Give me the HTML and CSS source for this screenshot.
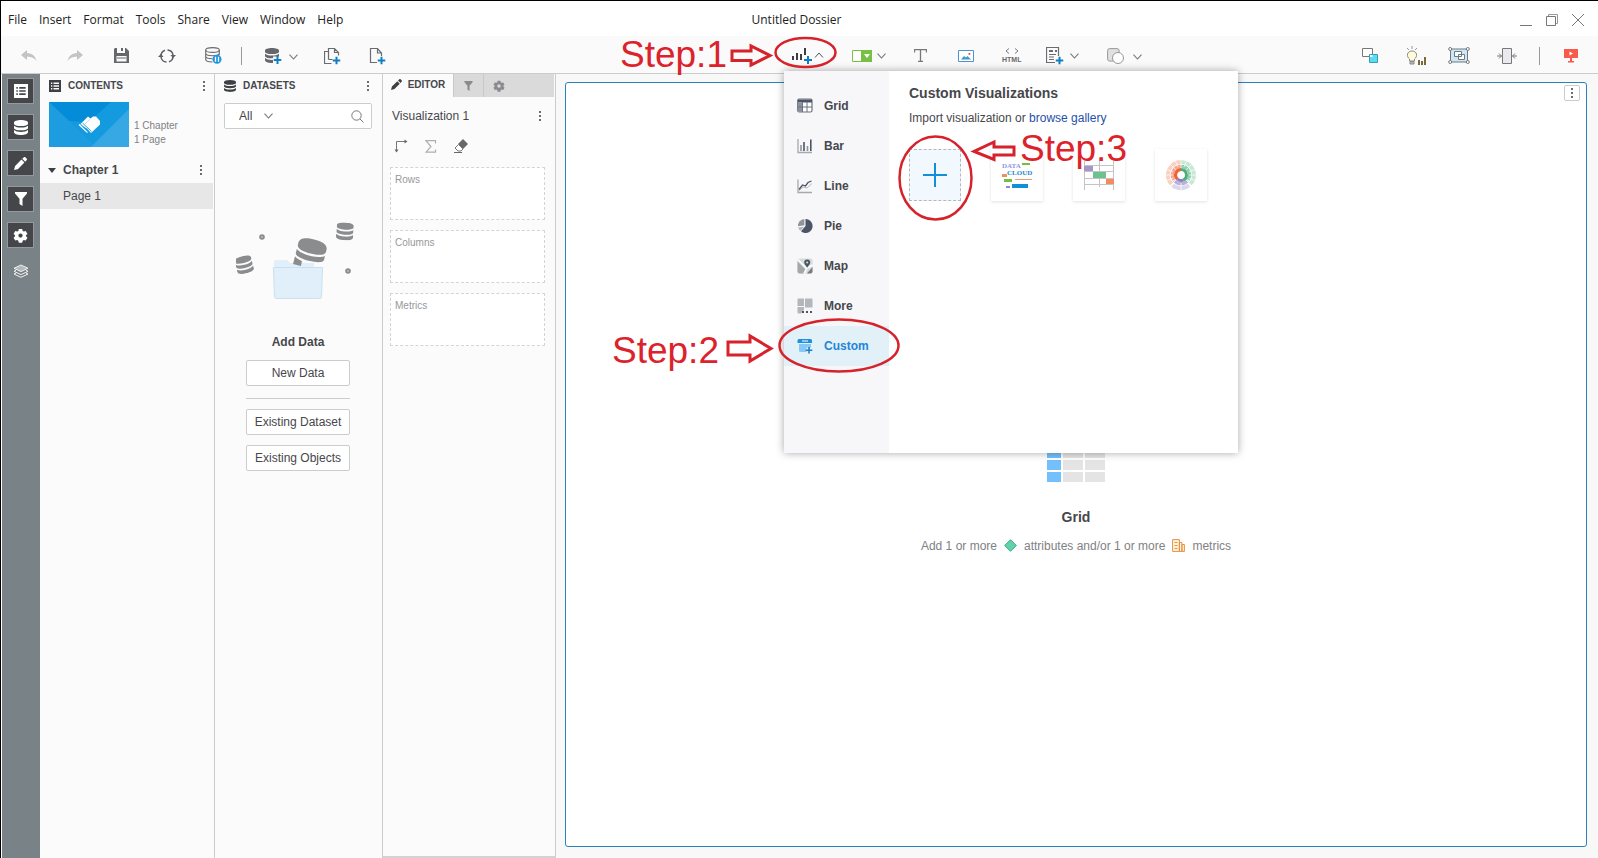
FILE: index.html
```html
<!DOCTYPE html>
<html lang="en">
<head>
<meta charset="utf-8">
<title>Untitled Dossier</title>
<link rel="stylesheet" href="styles.css">
</head>
<body>
<svg class="defs" aria-hidden="true">
  <symbol id="plus" viewBox="0 0 8 8"><path d="M3 0h2v3h3v2H5v3H3V5H0V3h3z" fill="#0f7fc4"/></symbol>
  <symbol id="chev" viewBox="0 0 9 6"><path d="M.5.7 4.500 5 8.500.7" fill="none" stroke="#777" stroke-width="1.100"/></symbol>
  <symbol id="kebab" viewBox="0 0 2 10"><path d="M0 0h2v2H0zM0 4h2v2H0zM0 8h2v2H0z" fill="#6a6c70"/></symbol>
  <symbol id="gear" viewBox="0 0 16 16"><path fill-rule="evenodd" d="M6.200 1h3.600l.5 2.100 1.200.7 2.100-.6 1.800 3.100-1.600 1.500v1l1.600 1.500-1.800 3.100-2.100-.6-1.200.7-.5 2.100H6.200l-.5-2.100-1.200-.7-2.100.6L.6 10.300l1.600-1.500v-1L.6 6.300l1.800-3.100 2.100.6 1.200-.7zM8 5.800a2.300 2.300 0 1 0 0 4.600 2.300 2.300 0 0 0 0-4.600z"/></symbol>
  <symbol id="funnel" viewBox="0 0 12 14"><path d="M0 0h12v1.500L7.500 6.800V14l-3-2V6.800L0 1.500z"/></symbol>
  <symbol id="pencil" viewBox="0 0 14 14"><path d="M0 14l1.200-4.400L8 2.800l3.200 3.200-6.800 6.800zM8.900 1.900 10.400.5c.6-.6 1.400-.6 2 0l1.100 1.100c.6.6.6 1.400 0 2l-1.400 1.500z"/></symbol>
  <symbol id="data" viewBox="0 0 14 15"><path d="M0 2.600C0 1.100 3 0 7 0s7 1.100 7 2.600v1.100c0 1.400-3 2.300-7 2.300S0 5.100 0 3.700zM0 5.700C1.500 7 4 7.600 7 7.600s5.500-.6 7-1.900v2.200c0 1.400-3 2.400-7 2.400S0 9.300 0 7.900zM0 10c1.500 1.300 4 1.900 7 1.900s5.500-.6 7-1.900v2.300C14 13.800 11 15 7 15s-7-1.200-7-2.700z"/></symbol>
  <symbol id="list" viewBox="0 0 12 12"><path fill-rule="evenodd" d="M0 0h12v12H0zM2 2.500V4h1.300V2.500zm2.500 0V4H10V2.500zM2 5.300v1.400h1.300V5.300zm2.500 0v1.400H10V5.300zM2 8v1.500h1.300V8zm2.500 0v1.500H10V8z"/></symbol>
</svg>

<div class="app">
  <header class="menubar">
    <nav class="menus">
      <button>File</button><button>Insert</button><button>Format</button><button>Tools</button><button>Share</button><button>View</button><button>Window</button><button>Help</button>
    </nav>
    <h1 class="doc-title">Untitled Dossier</h1>
    <div class="window-controls">
      <button aria-label="Minimize"><svg width="14" height="14"><path d="M1 12.500h12" stroke="#777"/></svg></button>
      <button aria-label="Restore"><svg width="14" height="14" fill="none" stroke="#777"><path d="M3.500 3.500v-2h9v9h-2" stroke="#999"/><path d="M1.500 3.500h9v9h-9z"/></svg></button>
      <button aria-label="Close"><svg width="14" height="14"><path d="M1 1l12 12M13 1 1 13" stroke="#777"/></svg></button>
    </div>
  </header>

  <div class="toolbar">
    <div class="tools tools-file">
      <button class="slot" aria-label="Undo"><svg width="18" height="14"><path d="M1 6 7 1v3c5 .2 8.500 3 9.500 8-2.500-3.200-5-4.200-9.500-4.200V11z" fill="#c3c4c6"/></svg></button>
      <button class="slot" aria-label="Redo"><svg width="18" height="14"><path d="M17 6 11 1v3C6 4.200 2.500 7 1.500 12 4 8.800 6.500 7.800 11 7.800V11z" fill="#c3c4c6"/></svg></button>
      <button class="slot" aria-label="Save"><svg width="15" height="15"><path fill-rule="evenodd" d="M1 0h11l3 3v12H0V1zM3 0v5h8V0H9v3H7V0zM2.500 8v5.500h10V8z" fill="#66676b"/><path d="M3 9.500h9v1H3z" fill="#66676b"/></svg></button>
      <button class="slot" aria-label="Refresh"><svg width="18" height="16" viewBox="0 0 18 16"><g fill="none" stroke="#5f6064" stroke-width="1.500"><path d="M3 7.500A6 6 0 0 1 7 2.200M9.500 2A6 6 0 0 1 15 7"/><path d="M15 8.500A6 6 0 0 1 11 13.800M8.500 14A6 6 0 0 1 3 9"/></g><path d="M12.500 7h5.500l-3 3.300zM0 9h5.500L3 5.700z" fill="#5f6064"/></svg></button>
      <button class="slot" aria-label="Pause data retrieval"><svg width="17" height="17" viewBox="0 0 17 17"><g fill="none" stroke="#6b6c70" stroke-width="1.100"><ellipse cx="7.500" cy="3" rx="6.800" ry="2.400"/><path d="M.7 3v9.500c0 1.500 3 2.500 6.800 2.500M14.300 3v5M.7 6.200c0 1.500 3 2.500 6.800 2.500s6.800-1 6.800-2.500M.7 9.300c0 1.500 3 2.500 6.800 2.500"/></g><circle cx="12" cy="12.300" r="4.500" fill="#1e96e0"/><path d="M10.500 9.800v5M13.500 9.800v5" stroke="#fff" stroke-width="1.300"/></svg></button>
      <span class="rule"></span>
      <button class="add-data" aria-label="Add data"><svg width="33" height="16" viewBox="0 0 33 16"><svg width="14" height="15" viewBox="0 0 14 15"><use href="#data" fill="#66676b"/></svg><path d="M8 8.500h6V16H8z" fill="#fafafa"/><use href="#plus" x="8.500" y="8" width="8" height="8"/><use href="#chev" x="24" y="6" width="9" height="6"/></svg></button>
      <button class="add-page" aria-label="Add chapter"><svg width="17" height="18" viewBox="0 0 17 18"><path d="M4.500 4.500h-4v12h7M4.500 12.500v-11h6l4 4v3M10.500 1.500v4h4M4.500 12.500h4" fill="none" stroke="#6b6c70" stroke-width="1.200"/><use href="#plus" x="8.500" y="9.500" width="8" height="8"/></svg></button>
      <button aria-label="Add page"><svg width="17" height="18" viewBox="0 0 17 18"><path d="M8 15.500H1.500v-14h7l4 4.500v3M8.500 1.500v4.500h4" fill="none" stroke="#6b6c70" stroke-width="1.200"/><use href="#plus" x="8.500" y="9.500" width="8" height="8"/></svg></button>
    </div>

    <div class="tools tools-insert">
      <div class="viz-menu">
        <button aria-label="Visualization" aria-expanded="true"><svg width="33" height="17" viewBox="0 0 33 17"><path d="M1 9h2v4H1zM5 6h2v7H5zM9 7h2v6H9zM13 1h2v7h-2z" fill="#3d3e42"/><use href="#plus" x="13" y="9" width="8" height="8"/><path d="M24 10.500 28 6l4 4.500" fill="none" stroke="#555"/></svg></button>
        <section class="popup">
          <nav class="kinds">
            <button><svg width="16" height="16" viewBox="0 0 16 16"><rect x=".7" y="1" width="14.300" height="13" rx="1.500" fill="#fff" stroke="#6c7380" stroke-width="1.200"/><path d="M1 1.500h14v3H1z" fill="#4c5565"/><path d="M1 4.500h4.500V14H1z" fill="#8d939e"/><path d="M5.500 4v10M10 4v10M1 9h14" stroke="#6c7380"/></svg>Grid</button>
            <button><svg width="16" height="16" viewBox="0 0 16 16"><path d="M1 1v13.500h14" fill="none" stroke="#a5a9b0" stroke-width="1.300"/><path d="M4 7v6M10.500 8v5" stroke="#8e939c" stroke-width="1.600"/><path d="M7 4v9M13.800 1.500V13" stroke="#4c5565" stroke-width="1.600"/></svg>Bar</button>
            <button><svg width="16" height="16" viewBox="0 0 16 16"><path d="M1 1.500v13h14" fill="none" stroke="#a5a9b0" stroke-width="1.300"/><path d="M2 12.500 6 9l4 1 5-4.500" fill="none" stroke="#b5b8be"/><path d="M2 11.500 5.500 7l3 1 2.500-3.500L14.500 3" fill="none" stroke="#4c5565" stroke-width="1.300"/></svg>Line</button>
            <button><svg width="16" height="16" viewBox="0 0 16 16"><path d="M8.500 1a7 7 0 1 1-4.500 12.300L8.500 8z" fill="#4c5565"/><path d="M7.300 1v6.300L1 8.200A7 7 0 0 1 7.300 1z" fill="#8e939c"/><path d="M1.200 9.500 7 8.800 3.300 12.700A6 6 0 0 1 1.200 9.500z" fill="#b0b4ba"/></svg>Pie</button>
            <button><svg width="16" height="16" viewBox="0 0 16 16"><rect x=".5" y=".5" width="15" height="15" rx="2" fill="#d6dad8"/><path d="M.5 3.500 9 12l-2 3.500H2.500a2 2 0 0 1-2-2z" fill="#a4a8aa"/><path d="M10 15.500 15.500 9v4.500a2 2 0 0 1-2 2z" fill="#777c80"/><path d="M1 1.500l8.500 9L15.500 7M9.500 11 7 15.500" fill="none" stroke="#fff" stroke-width="1.600"/><path fill-rule="evenodd" d="M10.200 1.500a3 3 0 0 1 3 3c0 2-1.800 3-3 5.200-1.200-2.200-3-3.200-3-5.200a3 3 0 0 1 3-3zm0 1.900a1.100 1.100 0 1 0 0 2.200 1.100 1.100 0 0 0 0-2.200z" fill="#4c5565"/></svg>Map</button>
            <button><svg width="16" height="16" viewBox="0 0 16 16"><path d="M.5 1.500a1 1 0 0 1 1-1H7V8H.5zM8 .5h6.500a1 1 0 0 1 1 1v8H8zM.5 9H7v2.500L4 15.500H1.500a1 1 0 0 1-1-1z" fill="#b3b6bb"/><path d="M5 13h2v2H5zM9 13h2v2H9zM13 13h2v2h-2z" fill="#4c5565"/></svg>More</button>
            <button class="active"><svg width="16" height="16" viewBox="0 0 16 16"><path d="M2 6h12v3.500H9.500V14H3.500A1.500 1.500 0 0 1 2 12.500z" fill="#86c8f5"/><path d="M2 1h11.500a1.500 1.500 0 0 1 1.500 1.500V5H.5V2.500A1.500 1.500 0 0 1 2 1z" fill="#1e90dd"/><path d="M5 3h6" stroke="#fff"/><path d="M12 9v6.500M8.800 12.200h6.500" stroke="#1e7fc8" stroke-width="1.600"/></svg>Custom</button>
          </nav>
          <div class="gallery">
            <h2>Custom Visualizations</h2>
            <p>Import visualization or <a href="#">browse gallery</a></p>
            <div class="tiles">
              <button class="tile tile-add" aria-label="Import visualization"><svg width="24" height="24"><path d="M12 0v24M0 12h24" stroke="#118fdc" stroke-width="2"/></svg></button>
              <button class="tile" aria-label="Data cloud"><svg width="32" height="32" viewBox="0 0 32 32"><text class="cloud" x="1" y="9" fill="#8d97de">DATA</text><text class="cloud" x="6" y="16" fill="#1c86cc">CLOUD</text><path d="M21 4h8v2h-8zM3 20h8v3H3z" fill="#72c040"/><path d="M1 15h5v3H1z" fill="#f0905c"/><path d="M14 20h17v1H14z" fill="#e8a070"/><path d="M5 27h4v2H5z" fill="#8f86dc"/><path d="M11 25h16v4H11z" fill="#118fdc"/></svg></button>
              <button class="tile" aria-label="Gantt"><svg width="32" height="32" viewBox="0 0 32 32"><path d="M1 6.500h30M1 12.500h30M1 19.500h30M1 25.500h30M1.500 2v29M16.500 2v26M30.500 2v29" stroke="#c4c4c6"/><path d="M1 7h9v5H1z" fill="#a297c8"/><path d="M10 13h13v6H10z" fill="#6bc28c"/><path d="M23 20h8v5h-8z" fill="#f58b5c"/></svg></button>
              <button class="tile" aria-label="Sunburst"><svg width="32" height="32" viewBox="0 0 32 32" fill="none"><g stroke-width="4"><path d="M16 3a13 13 0 0 1 9 22.400" stroke="#c8e8d6"/><path d="M16 3A13 13 0 0 0 6.500 25" stroke="#fad0c2"/><path d="M24 26.300a13 13 0 0 1-16.500 0" stroke="#dcd8ec"/></g><g stroke-width="3.500"><path d="M16 7.500a8.500 8.500 0 0 1 7 13.300" stroke="#92d0ae"/><path d="M16 7.500a8.500 8.500 0 0 0-7 13.300" stroke="#f6a68c"/><path d="M22.500 21.500a8.500 8.500 0 0 1-13 0" stroke="#b8b2da"/></g><g stroke="#fff" stroke-width=".7"><path d="M16 0v9M16 24v8M0 16h8M24 16h8M5 5l6 6M27 5l-6 6M5 27l6-6M27 27l-6-6M10 1l3 7M22 1l-3 7M1 10l7 3M31 10l-7 3M1 22l7-3M31 22l-7-3"/></g><circle cx="16" cy="16" r="7" fill="#fff"/><g stroke-width="3"><path d="M16 10.500a5.500 5.500 0 0 1 2 10.600" stroke="#4faf7a"/><path d="M16 10.500a5.500 5.500 0 0 0-3.500 9.700" stroke="#ee6338"/><path d="M12.500 20.200a5.500 5.500 0 0 0 5.500.9" stroke="#8c7fc0"/></g></svg></button>
            </div>
          </div>
        </section>
      </div>
      <button aria-label="Filter"><svg width="34" height="12" viewBox="0 0 34 12"><path d="M.5.5h19v11H.5z" fill="#fff" stroke="#77c043"/><path d="M9 0h11v12H9z" fill="#77c043"/><path d="M12 4h6l-3 4z" fill="#fff"/><use href="#chev" x="25" y="3" width="9" height="6"/></svg></button>
      <button class="text-tool" aria-label="Text"><svg width="13" height="13"><path d="M.5 3.500V.6h12v2.900M6.500.6v12M4 12.400h5" fill="none" stroke="#77787c" stroke-width="1.300"/></svg></button>
      <button aria-label="Image"><svg width="16" height="12"><path d="M.5.500h15v11H.5z" fill="#fff" stroke="#4a94d2"/><path d="M3 9.500 6 6l2 1.500L9.500 6 13 9.500z" fill="#4a94d2"/><path d="M10.500 3h1.800v1.800h-1.800z" fill="#e05050"/></svg></button>
      <button class="html-tool" aria-label="HTML container"><svg width="14" height="6"><path d="M4 .5 1 3l3 2.500M10 .5 13 3l-3 2.500" fill="none" stroke="#77787c"/></svg><span>HTML</span></button>
      <button aria-label="Rich text"><svg width="33" height="18" viewBox="0 0 33 18"><path d="M9 15.500H.5V.5h12V9" fill="none" stroke="#6b6c70" stroke-width="1.200"/><path d="M3 3h4v2H3zM9 3h2v2H9z" fill="#6b6c70"/><path d="M3 7.500h7M3 10h5M3 12.500h5" stroke="#6b6c70"/><use href="#plus" x="9.500" y="9.500" width="8" height="8"/><use href="#chev" x="24" y="6" width="9" height="6"/></svg></button>
      <button aria-label="Shape"><svg width="35" height="16" viewBox="0 0 35 16"><rect x=".6" y=".6" width="11.500" height="12.500" rx="2" fill="#e0e0e0" stroke="#999"/><circle cx="11" cy="10" r="5.500" fill="#fff" stroke="#999"/><use href="#chev" x="26" y="6" width="9" height="6"/></svg></button>
    </div>

    <div class="tools tools-view">
      <button aria-label="Arrange"><svg width="17" height="16"><path d="M.5.500h10v8H.5z" fill="#fff" stroke="#77787c"/><path d="M7.500 6.500h8v8h-8z" fill="#5cdcf4" stroke="#3b9cae"/><path d="M8 7h2.500v2H8z" fill="#fff"/></svg></button>
      <button aria-label="Insights"><svg width="20" height="20" viewBox="0 0 20 20"><path d="M6 0v3M1 2l2 2M11 2 9 4" stroke="#999"/><path d="M3.500 15v-2C0 10.500 1 5 6 5s6 5.500 2.500 8v2z" fill="#fffbd8" stroke="#8a8a86"/><path d="M4 15.500h4v2.500H4z" fill="#bbb" stroke="#888"/><path d="M12 14h2v5h-2zM15 15h2v4h-2zM18 11h2v8h-2z" fill="#7d6a3c"/></svg></button>
      <button aria-label="Group"><svg width="22" height="17" viewBox="0 0 22 17"><path d="M2.500 2h17v13h-17z" fill="#cfe6f4" stroke="#6c7a84"/><path d="M6.500 4.500h7v5h-7zM10.500 7.500h6v5h-6z" fill="#fff" stroke="#6c7a84"/><g fill="#fff" stroke="#777"><circle cx="2.200" cy="2" r="1.500"/><circle cx="19.800" cy="2" r="1.500"/><circle cx="2.200" cy="15" r="1.500"/><circle cx="19.800" cy="15" r="1.500"/></g></svg></button>
      <button aria-label="Fit"><svg width="20" height="16"><path d="M5.500.500h9v15h-9z" fill="#eaeaee" stroke="#77787c"/><path d="M0 8h4.500M2 5.500 4.500 8 2 10.500M20 8h-4.500M18 5.500 15.500 8l2.500 2.500" fill="none" stroke="#777"/></svg></button>
      <span class="rule"></span>
      <button aria-label="Present"><svg width="14" height="14"><path d="M0 0h14v9H8v3h2v1.500H4V12h2V9H0z" fill="#f85a4c"/><path d="M5.500 2.500 9 4.500 5.500 6.500z" fill="#fff"/></svg></button>
    </div>
  </div>

  <main class="workspace">
    <nav class="rail">
      <button aria-label="Contents"><svg width="14" height="14" viewBox="0 0 12 12" fill="#fff"><use href="#list"/></svg></button>
      <button aria-label="Datasets"><svg width="14" height="15" fill="#fff"><use href="#data"/></svg></button>
      <button aria-label="Editor"><svg width="13" height="13" viewBox="0 0 14 14" fill="#fff"><use href="#pencil"/></svg></button>
      <button aria-label="Filter"><svg width="12" height="14" fill="#fff"><use href="#funnel"/></svg></button>
      <button aria-label="Format"><svg width="15" height="15" viewBox="0 0 16 16" fill="#fff"><use href="#gear"/></svg></button>
      <button class="plain" aria-label="Layers"><svg width="16" height="14" viewBox="0 0 16 14" fill="none" stroke="#f0f2f3"><path d="M8 1l7 3.300L8 7.600 1 4.300z" fill="#b4babc"/><path d="M3 6.300 1 7.300l7 3.300 7-3.300-2-1M3 9 1 10l7 3.300 7-3.300-2-1"/></svg></button>
    </nav>

    <section class="panel contents">
      <header class="panel-head"><svg width="12" height="12" fill="#3f4044"><use href="#list"/></svg><h2>CONTENTS</h2><button class="more" aria-label="Contents options"><svg width="2" height="10"><use href="#kebab"/></svg></button></header>
      <div class="summary">
        <svg class="cover" width="80" height="45" viewBox="0 0 80 45"><path fill="#149bdf" d="M0 0h80v45H0z"/><path d="M0 0h62L40 20 20 19z" fill="#058cd8"/><path d="M20 19 0 0v38zM0 38 20 19 46 45H0z" fill="#1e9ce0"/><path d="M80 7v38H42z" fill="#38a8e4"/><path d="M31 22.500 39 14.500 41.500 16.500 44 14.500h3L51 19v3.500L42 31l-4-4.500-1-.5z" fill="#fff"/><path d="M30 22.500l8.500 8" fill="none" stroke="#fff" stroke-width="1.200"/><path d="M31.500 22l8.500 8.500M33.500 21l9 8.500" fill="none" stroke="#149bdf" stroke-width=".9"/><path d="M41.500 16.500 35.500 22.500" stroke="#9fd4f2" stroke-width=".7"/></svg>
        <p>1 Chapter<br>1 Page</p>
      </div>
      <div class="chapter"><svg width="8" height="5"><path d="M0 0h8L4 5z" fill="#3f4044"/></svg><strong>Chapter 1</strong><button class="more" aria-label="Chapter options"><svg width="2" height="10"><use href="#kebab"/></svg></button></div>
      <button class="page">Page 1</button>
    </section>

    <section class="panel datasets">
      <header class="panel-head"><svg width="12" height="12" viewBox="0 0 14 15" preserveAspectRatio="none" fill="#3f4044"><use href="#data"/></svg><h2>DATASETS</h2><button class="more" aria-label="Dataset options"><svg width="2" height="10"><use href="#kebab"/></svg></button></header>
      <div class="search">
        <select aria-label="Search scope"><option>All</option></select>
        <svg width="9" height="6"><use href="#chev"/></svg>
        <input type="text" aria-label="Search datasets">
        <svg width="13" height="13" fill="none" stroke="#777"><circle cx="5.500" cy="5.500" r="4.700"/><path d="M9 9l3.500 3.500"/></svg>
      </div>
      <svg class="art" width="120" height="78" viewBox="0 0 120 78">
        <path d="M38 46v-6a2 2 0 0 1 2-2h11l3 3h24v6z" fill="#e0eff9"/>
        <g fill="#8b8c8e">
          <g transform="translate(61 16) rotate(14 14 12)"><path d="M0 8C0 3 6 1 14.500 1S29 3 29 8v2c0 4-7 5.500-14.500 5.500S0 14 0 10zM0 14.500c6 4.500 23 4.500 29 0v4c0 3-7 4.500-14.500 4.500S0 21.500 0 18.500z"/><path d="M0 22c2 1.500 5 2.500 8 3v5H0z"/></g>
          <g transform="translate(0 34) rotate(-14 8 10) scale(1.220 1.180)"><use href="#data" width="14" height="15"/></g>
          <g transform="translate(101 0) rotate(4) scale(1.220 1.180)"><use href="#data" width="14" height="15"/></g>
          <circle cx="26" cy="15" r="2.800"/><circle cx="112" cy="49" r="2.800"/>
        </g>
        <circle cx="26" cy="15" r="1" fill="#bbb"/><circle cx="112" cy="49" r="1" fill="#bbb"/>
        <path d="M37.500 45.500h49l-1 29a2 2 0 0 1-2 2h-43a2 2 0 0 1-2-2z" fill="#e0eff9" stroke="#c8e0f0"/>
      </svg>
      <div class="add-box">
        <h3>Add Data</h3>
        <button>New Data</button>
        <hr>
        <button>Existing Dataset</button>
        <button>Existing Objects</button>
      </div>
    </section>

    <section class="panel editor">
      <div class="tabs">
        <button class="tab current"><svg width="11" height="11" viewBox="0 0 14 14" fill="#3f4044"><use href="#pencil"/></svg>EDITOR</button>
        <button class="tab" aria-label="Filter"><svg width="9" height="10" viewBox="0 0 12 14" fill="#8a8b8e"><use href="#funnel"/></svg></button>
        <button class="tab" aria-label="Format"><svg width="12" height="12" viewBox="0 0 16 16" fill="#8a8b8e"><use href="#gear"/></svg></button>
      </div>
      <div class="viz-name"><span>Visualization 1</span><button class="more" aria-label="Visualization options"><svg width="2" height="10"><use href="#kebab"/></svg></button></div>
      <div class="viz-tools">
        <button aria-label="Swap"><svg width="14" height="14"><path d="M2.500 12V2.500H12" fill="none" stroke="#77787c"/><path d="M.5 10.500h4L2.500 13.500zM10.500.5v4l3-2z" fill="#66676b"/></svg></button>
        <button aria-label="Totals"><svg width="12" height="13"><path d="M10.500 3.500V.7H1l5 5.800-5 5.700h9.500V9.500" fill="none" stroke="#aeafb1" stroke-width="1.200"/></svg></button>
        <button aria-label="Clear"><svg width="14" height="14"><path d="M9 0 14 5 9 10 4 5z" fill="#66676b"/><path d="M4.500 5.500 1 9l3 3h3l2-2z" fill="#fff" stroke="#77787c"/><path d="M0 13.500h8" stroke="#66676b"/></svg></button>
      </div>
      <div class="zones"><div class="zone">Rows</div><div class="zone">Columns</div><div class="zone">Metrics</div></div>
    </section>

    <section class="canvas">
      <div class="frame">
        <button class="frame-more" aria-label="Options"><svg width="2" height="10"><use href="#kebab"/></svg></button>
        <svg width="58" height="58"><path d="M0 0h14v10H0zM0 12h14v10H0zM0 24h14v10H0zM0 36h14v10H0zM0 48h14v10H0z" fill="#74c0fc"/><path d="M16 0h20v10H16zM38 0h20v10H38zM16 12h20v10H16zM38 12h20v10H38zM16 24h20v10H16zM38 24h20v10H38zM16 36h20v10H16zM38 36h20v10H38zM16 48h20v10H16zM38 48h20v10H38z" fill="#e4e4e4"/></svg>
        <h2>Grid</h2>
        <p>Add 1 or more <svg width="13" height="13"><path d="M6.500.7l5.800 5.800-5.800 5.800L.7 6.500z" fill="#5fd3ad" stroke="#3aa585"/></svg> attributes and/or 1 or more <svg width="13" height="13"><path d="M.6.600h6.800v11.800H.6zM7.400 3.500h2.500v8.900H7.400zM9.900 5.500h2.500v6.900H9.900z" fill="#fff3e4" stroke="#e8923c"/><path d="M2.500 3.500h3M2.500 6.500h3M2.500 9.500h3" stroke="#e8923c"/></svg> metrics</p>
      </div>
    </section>
  </main>
</div>

<svg class="notes" width="1240" height="380" viewBox="0 0 1240 380">
  <g fill="none" stroke="#d6222b" stroke-width="2.500">
    <ellipse cx="805.500" cy="52.500" rx="30" ry="14.500"/>
    <ellipse cx="839" cy="345.500" rx="59.500" ry="26"/>
    <ellipse cx="935.500" cy="178" rx="36" ry="41.500"/>
  </g>
  <g fill="none" stroke="#d6222b" stroke-width="3">
    <path d="M732 51h19v-5l19 9.500-19 9.500v-4.500h-19z"/>
    <path d="M728 342h22v-6l21 12.500-21 12.500v-6h-22z"/>
    <path d="M1014 147h-20v-5l-20 9.500 20 8v-4.500h20z"/>
  </g>
  <text x="620" y="67">Step:1</text>
  <text x="612" y="363">Step:2</text>
  <text x="1020" y="161">Step:3</text>
</svg>
</body>
</html>
```
FILE: styles.css
```css
* { box-sizing: border-box; }
body {
  margin: 0;
  font: 12px/16px "Liberation Sans", Arial, sans-serif;
  color: #46474b;
  background: #fff;
}
h1, h2, h3, p { margin: 0; }
button {
  padding: 0;
  border: 0;
  background: none;
  font: inherit;
  color: inherit;
}
svg { display: block; flex: none; }
.defs { position: absolute; width: 0; height: 0; }

.app {
  display: flex;
  flex-direction: column;
  min-height: 100vh;
  border-top: 1px solid #000;
  border-left: 1px solid #000;
}

/* Menu bar */
.menubar {
  display: grid;
  grid-template-columns: 1fr auto 1fr;
  align-items: center;
  height: 35px;
  padding: 2px 13px 0 7px;
  font-family: "Open Sans", "Noto Sans", sans-serif;
  color: #222;
}
.menus { display: flex; gap: 12px; }
.doc-title { font-size: 12px; font-weight: 400; }
.window-controls { display: flex; justify-content: flex-end; gap: 12px; }

/* Toolbar */
.toolbar {
  display: grid;
  grid-template-columns: 790px auto 1fr;
  height: 38px;
  padding-top: 2px;
  background: #fafafa;
  border-bottom: 1px solid #ccc;
}
.tools { display: flex; align-items: center; }
.tools-file { padding-left: 5px; }
.slot { width: 46px; display: flex; justify-content: center; }
.rule { width: 1px; height: 18px; background: #999; }
.tools-file .rule { margin-left: 5px; }
.add-data { margin: 0 26px 0 23px; }
.add-page { margin-right: 28px; }
.tools-insert { gap: 28px; }
.text-tool { margin-right: 3px; }
.html-tool {
  display: flex;
  flex-direction: column;
  align-items: center;
  gap: 2px;
  margin-right: -3px;
  font: bold 7px/8px "Liberation Sans", Arial, sans-serif;
  color: #66676b;
}
.tools-view { justify-content: flex-end; gap: 24px; padding-right: 22px; }
.tools-view button:nth-child(odd) { margin-right: 3px; }
.tools-view button:nth-child(even) { margin-right: -2px; }

/* Visualization popup */
.viz-menu { position: relative; display: flex; }
.popup {
  position: absolute;
  z-index: 2;
  top: 24px;
  left: -7px;
  display: flex;
  width: 454px;
  height: 382px;
  background: #fff;
  box-shadow: 0 0 8px rgba(0, 0, 0, .35);
}
.kinds { width: 105px; padding-top: 15px; background: #f7f7fa; }
.kinds button {
  display: flex;
  align-items: center;
  gap: 11px;
  width: 100%;
  height: 40px;
  padding-left: 13px;
  font-weight: bold;
}
.kinds .active { background: #e2f0f8; color: #2485d8; }
.gallery { padding: 14px 20px; }
.gallery h2 { font-size: 14px; line-height: 16px; }
.gallery p { margin: 9px 0 23px; }
.gallery a { color: #2550a8; text-decoration: none; }
.tiles { display: flex; gap: 30px; }
.tile {
  display: flex;
  align-items: center;
  justify-content: center;
  width: 52px;
  height: 52px;
  background: #fff;
  box-shadow: 0 1px 3px rgba(0, 0, 0, .12);
}
.tile-add { background: #f2f9fe; border: 1px dashed #b4b8bc; box-shadow: none; }
.cloud { font: bold 7px "Liberation Serif", serif; }

/* Workspace */
.workspace { display: flex; flex: 1; }
.rail {
  display: flex;
  flex-direction: column;
  gap: 10px;
  width: 39px;
  padding: 4px 0 0 5px;
  background: #798286;
  border-left: 1px solid #fff;
}
.rail button {
  display: flex;
  align-items: center;
  justify-content: center;
  width: 27px;
  height: 26px;
  background: #45464a;
  border: 1px solid #93999c;
}
.rail .plain { background: none; border: 0; }

.panel { background: #fbfbfb; border-right: 1px solid #ccc; }
.contents { width: 175px; }
.datasets { width: 168px; }
.editor { width: 173px; border-bottom: 2px solid #d2d2d2; }
.panel-head {
  display: flex;
  align-items: center;
  gap: 7px;
  height: 24px;
  padding: 0 9px;
}
.panel-head h2 { flex: 1; font-size: 10px; }
.more { display: flex; justify-content: center; width: 2px; }

.summary { display: flex; gap: 5px; padding: 4px 9px 0; }
.summary p { padding-top: 17px; font-size: 10px; line-height: 14px; color: #808184; }
.chapter {
  display: flex;
  align-items: center;
  gap: 7px;
  height: 26px;
  margin-top: 10px;
  padding: 0 12px 0 8px;
}
.chapter strong { flex: 1; }
.page {
  display: block;
  width: calc(100% - 1px);
  height: 26px;
  padding-left: 23px;
  background: #e7e7e7;
  text-align: left;
}

.datasets .panel-head { padding-right: 13px; }
.search {
  display: flex;
  align-items: center;
  height: 26px;
  margin: 5px 10px 0 9px;
  padding: 0 7px 0 14px;
  background: #fff;
  border: 1px solid #ccc;
  border-radius: 2px;
}
.search select, .search input {
  min-width: 0;
  padding: 0;
  border: 0;
  background: none;
  font: inherit;
  color: inherit;
  appearance: none;
}
.search select { width: 25px; }
.search input { flex: 1; outline: 0; }
.art { margin: 93px 0 0 21px; }
.add-box {
  display: flex;
  flex-direction: column;
  gap: 10px;
  width: 104px;
  margin: 35px 0 0 31px;
  text-align: center;
}
.add-box h3 { font-size: 12px; line-height: 15px; }
.add-box button { height: 26px; background: #fff; border: 1px solid #ccc; border-radius: 2px; }
.add-box hr { width: 100%; height: 1px; margin: 2px 0 0; border: 0; background: #ccc; }

.tabs { display: flex; height: 23px; margin-right: 1px; background: #dadada; }
.tab {
  display: flex;
  align-items: center;
  justify-content: center;
  width: 30px;
  border-right: 1px solid #c8c8c8;
}
.tab:last-child { border-right: 0; }
.tab.current { gap: 6px; width: 71px; padding-bottom: 2px; background: #fbfbfb; font-size: 10px; font-weight: bold; }
.viz-name { display: flex; align-items: center; justify-content: space-between; padding: 11px 14px 0 9px; }
.viz-tools { display: flex; gap: 17px; padding: 15px 11px 0; }
.zones { display: flex; flex-direction: column; gap: 10px; padding: 14px 10px 0 7px; }
.zone {
  height: 53px;
  padding: 4px;
  background: #fff;
  border: 1px dashed #d4d4d4;
  font-size: 10px;
  color: #97989a;
}

.canvas { flex: 1; display: flex; padding: 8px 11px 11px 9px; background: #f8f8f8; }
.frame {
  position: relative;
  flex: 1;
  display: flex;
  flex-direction: column;
  align-items: center;
  justify-content: center;
  padding-top: 48px;
  background: #fff;
  border: 1px solid #2a82bd;
  border-radius: 3px;
}
.frame h2 { margin: 27px 0 13px; font-size: 14px; line-height: 16px; }
.frame p { display: flex; align-items: center; gap: 7px; color: #808184; }
.frame-more {
  position: absolute;
  top: 2px;
  right: 6px;
  display: flex;
  align-items: center;
  justify-content: center;
  width: 16px;
  height: 16px;
  background: #fff;
  border: 1px solid #ccc;
  border-radius: 2px;
}

/* Tutorial markup drawn over the window */
.notes { position: absolute; z-index: 3; top: 0; left: 0; pointer-events: none; }
.notes text { font: 37px "Liberation Sans", Arial, sans-serif; fill: #dc222b; }
```
